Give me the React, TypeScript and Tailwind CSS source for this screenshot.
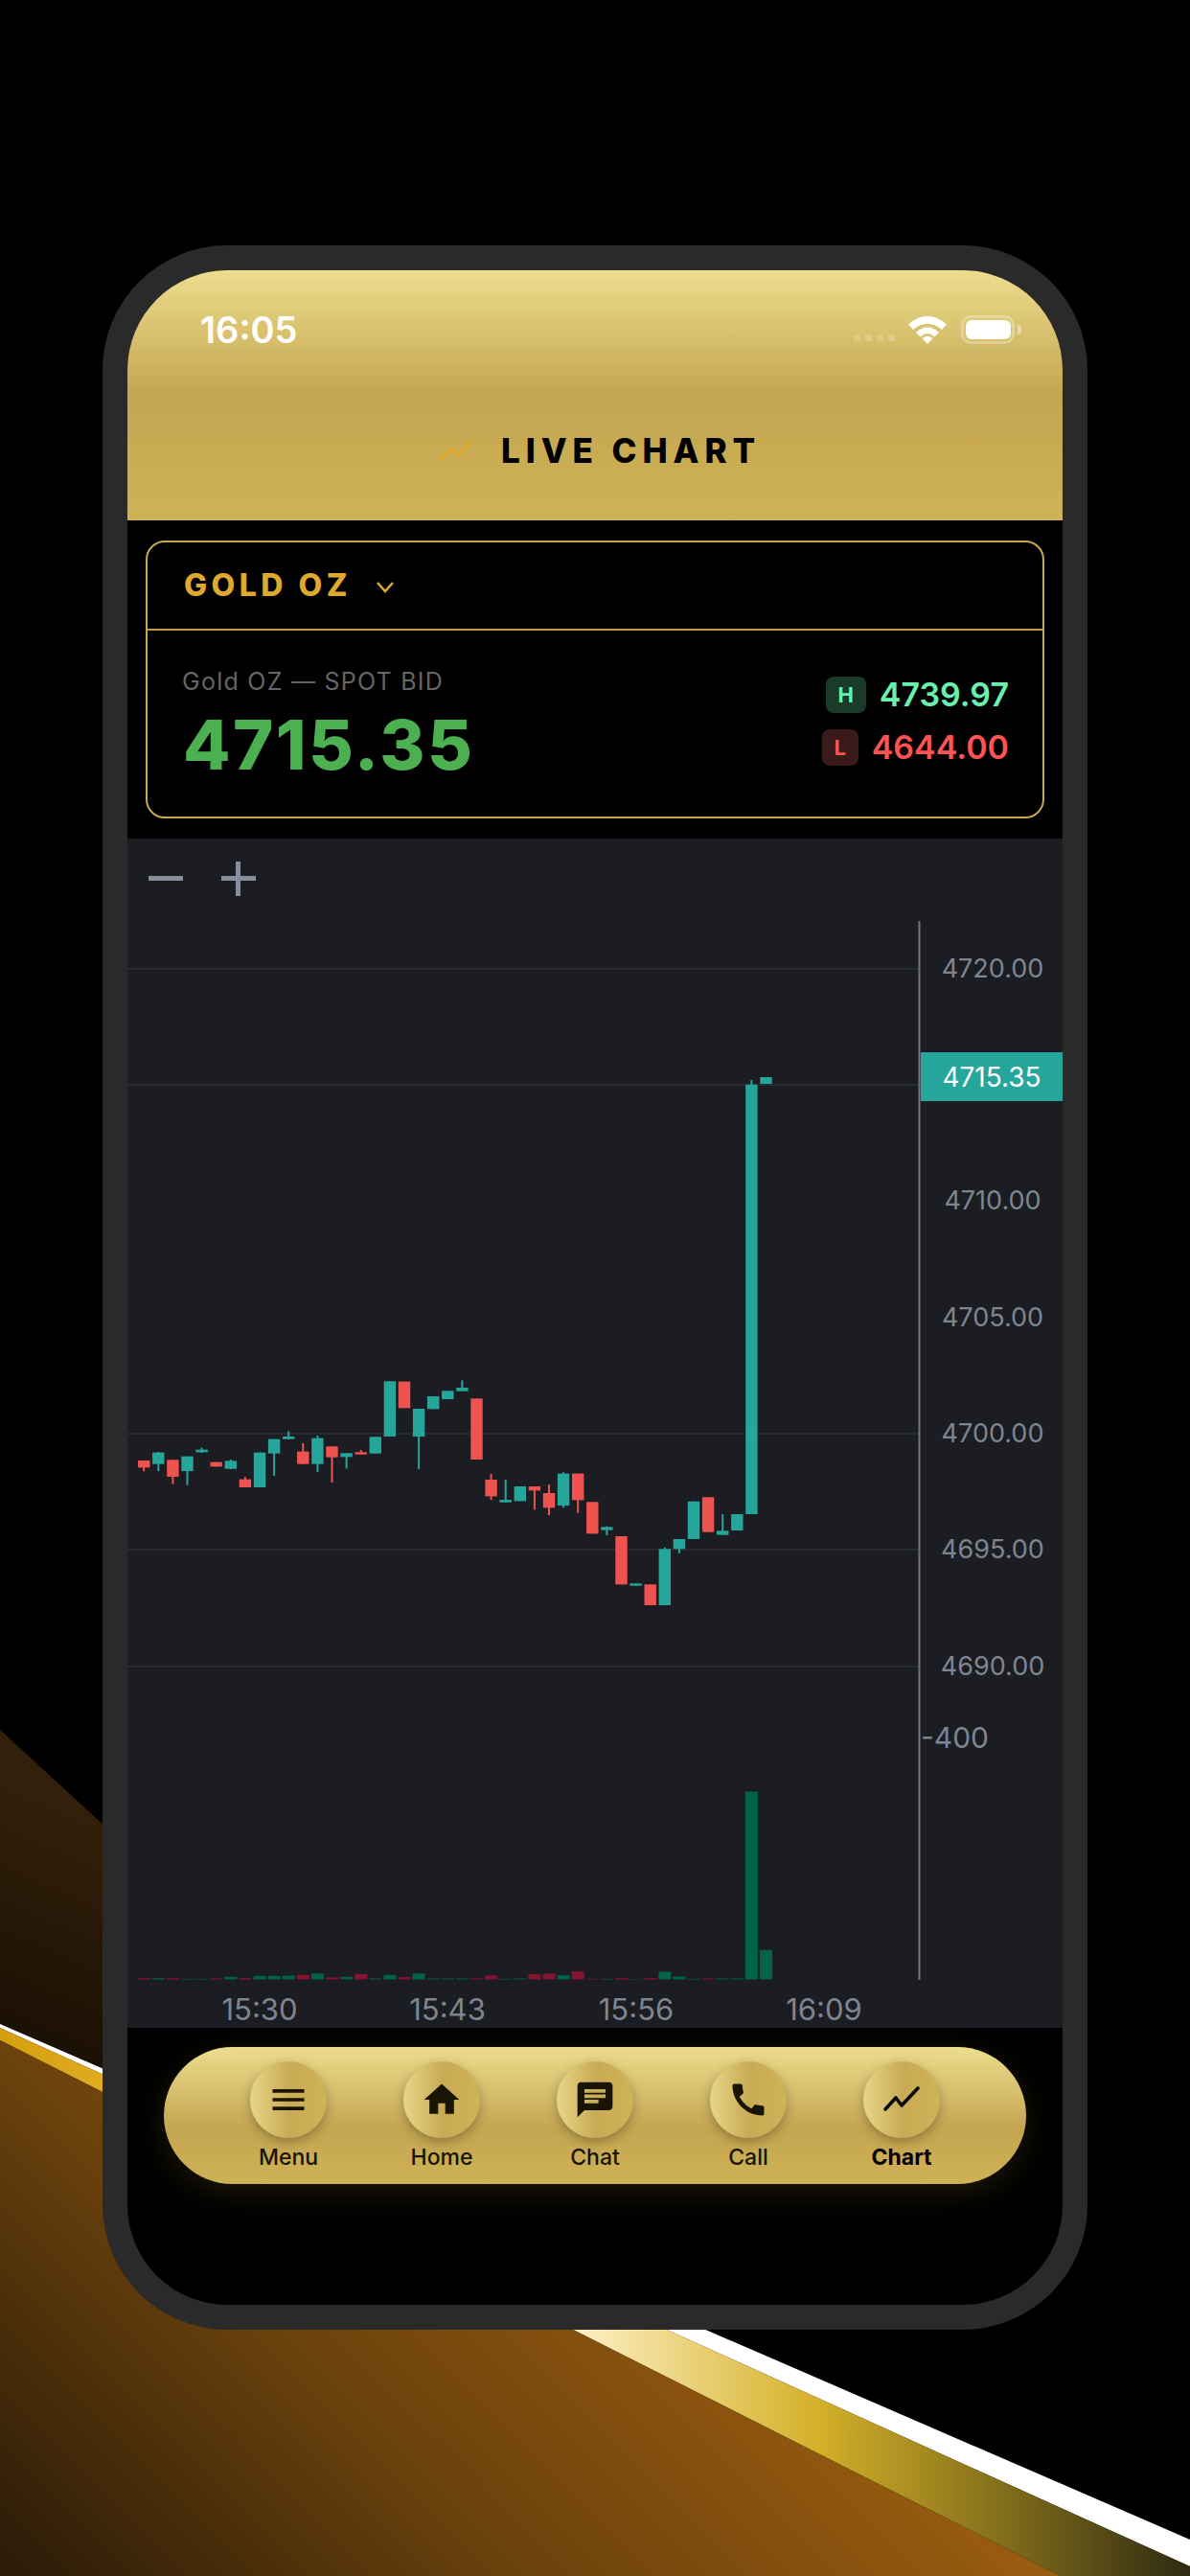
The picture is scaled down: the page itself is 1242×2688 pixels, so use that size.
import React from 'react';
import { MdHome, MdChat, MdCall, MdMenu } from 'react-icons/md';

type Candle = [number, number, number, number, number];

// up(1)/down(0), body top, body bottom, wick top, wick bottom - y in 3x crop units from 1380
const candles: Candle[] = [
  [0, 432, 454, 432, 466], [1, 407, 443, 405, 465], [0, 430, 483, 430, 506], [1, 419, 465, 419, 509],
  [1, 398, 406, 392, 408], [0, 437, 451, 437, 451], [1, 433, 458, 429, 459], [0, 491, 516, 484, 516],
  [1, 407, 516, 407, 516], [1, 365, 410, 365, 480], [1, 357, 365, 340, 366], [0, 404, 443, 378, 443],
  [1, 362, 443, 354, 468], [0, 388, 422, 388, 501], [1, 409, 421, 409, 457], [0, 406, 413, 399, 413],
  [1, 358, 410, 358, 410], [1, 184, 357, 184, 357], [0, 185, 268, 185, 268], [1, 270, 357, 270, 459],
  [1, 231, 271, 231, 271], [1, 214, 240, 214, 240], [1, 204, 215, 181, 215], [0, 238, 429, 238, 429],
  [0, 492, 544, 474, 556], [1, 555, 563, 492, 563], [1, 513, 559, 513, 559], [0, 513, 526, 513, 586],
  [0, 534, 580, 507, 603], [1, 473, 573, 469, 580], [0, 473, 556, 473, 596], [0, 562, 661, 562, 661],
  [1, 640, 650, 638, 666], [0, 669, 820, 669, 820], [1, 817, 824, 817, 824], [0, 820, 885, 820, 885],
  [1, 709, 885, 704, 885], [1, 678, 709, 678, 723], [1, 560, 678, 560, 678], [0, 547, 656, 547, 656],
  [1, 652, 665, 600, 665], [1, 600, 651, 600, 651], [1, -745, 600, -759, 600], [1, -768, -747, -768, -747],
];

// same order as candles, heights in px
const volumes = [
  1.3, 1.3, 1.3, 0.6, 0.6, 1, 2.7, 1.3, 3.7, 3.7, 4, 4.7, 6.3, 2, 2.7, 5.7, 1, 4.7, 2.3, 6.3, 1, 1, 1, 1,
  4, 0.6, 1, 5.3, 6, 4.3, 8.3, 0.6, 0.6, 1.3, 0.4, 1.3, 8, 3, 0.6, 1, 1, 1, 196, 30.7,
];
const volumeUp = [
  0, 1, 0, 1, 1, 0, 1, 0, 1, 1, 1, 0, 1, 0, 1, 0, 1, 1, 0, 1, 1, 1, 1, 0, 0, 1, 1, 0, 0, 1, 0, 0, 1, 0, 1, 0,
  1, 1, 1, 0, 1, 1, 1, 1,
];

const axisLabels = [
  { y: 1011, text: '4720.00' },
  { y: 1253, text: '4710.00' },
  { y: 1375, text: '4705.00' },
  { y: 1496, text: '4700.00' },
  { y: 1617, text: '4695.00' },
  { y: 1739, text: '4690.00' },
];

const times = [
  { x: 271, text: '15:30' },
  { x: 467, text: '15:43' },
  { x: 664, text: '15:56' },
  { x: 860, text: '16:09' },
];

function ThinChart({ className, size }: { className?: string; size?: number }) {
  return (
    <svg className={className} width={size} height={size} viewBox="0 0 44 44" fill="none">
      <path d="M5 32 L16 20 L22 28 L39 10" stroke="currentColor" strokeWidth="3.6" strokeLinecap="round" strokeLinejoin="round" />
    </svg>
  );
}

const navItems = [
  { label: 'Menu', Icon: MdMenu },
  { label: 'Home', Icon: MdHome },
  { label: 'Chat', Icon: MdChat },
  { label: 'Call', Icon: MdCall },
  { label: 'Chart', Icon: ThinChart, active: true },
];

function Backdrop() {
  return (
    <svg className="absolute inset-0" width="1242" height="2688" viewBox="0 0 1242 2688">
      <defs>
        <linearGradient id="darkBrown" gradientUnits="userSpaceOnUse" x1="0" y1="2150" x2="107" y2="1900">
          <stop offset="0" stopColor="#170e03" />
          <stop offset="1" stopColor="#33200a" />
        </linearGradient>
        <linearGradient id="brown" gradientUnits="userSpaceOnUse" x1="0" y1="2688" x2="553" y2="2135">
          <stop offset="0" stopColor="#2a1a08" />
          <stop offset="0.5" stopColor="#6b420c" />
          <stop offset="1" stopColor="#9a5c10" />
        </linearGradient>
        <linearGradient id="goldBand" gradientUnits="userSpaceOnUse" x1="0" y1="0" x2="1242" y2="0">
          <stop offset="0" stopColor="#d69d10" />
          <stop offset="0.086" stopColor="#e0ab1e" />
          <stop offset="0.483" stopColor="#fff0c4" />
          <stop offset="0.688" stopColor="#d4b028" />
          <stop offset="1" stopColor="#2e2a10" />
        </linearGradient>
      </defs>
      <polygon points="0,1805 300,2081 300,2242 0,2112" fill="url(#darkBrown)" />
      <polygon points="0,2112 1242,2650 1242,2678 0,2116" fill="#ffffff" />
      <polygon points="0,2116 1242,2678 1242,2688 1107,2688 0,2129" fill="url(#goldBand)" />
      <polygon points="0,2129 1107,2688 0,2688" fill="url(#brown)" />
    </svg>
  );
}

function StatusBar() {
  return (
    <div className="mt-[42px] flex h-[40px] items-center justify-between pl-[76px] pr-[43px]">
      <span className="text-[38px] font-semibold leading-none text-white">16:05</span>
      <div className="flex items-center">
        <div className="mt-[16px] flex gap-[5px]">
          <span className="h-[7px] w-[7px] rounded-[2px] bg-white/20" />
          <span className="h-[7px] w-[7px] rounded-[2px] bg-white/20" />
          <span className="h-[7px] w-[7px] rounded-[2px] bg-white/20" />
          <span className="h-[7px] w-[7px] rounded-[2px] bg-white/20" />
        </div>
        <svg className="ml-[14px]" width="40" height="30" viewBox="0 0 40 30">
          <path d="M0 9.5 Q20 -8 40 9.5 L35 15 Q20 2.5 5 15 Z" fill="#fff" />
          <path d="M8 18 Q20 7 32 18 L27.5 22.5 Q20 15.5 12.5 22.5 Z" fill="#fff" />
          <path d="M14.5 24 Q20 19.5 25.5 24 L20 30 Z" fill="#fff" />
        </svg>
        <div className="ml-[15px] flex items-center">
          <div className="flex h-[30px] w-[56px] items-center justify-center rounded-[10px] border-[3px] border-white/30">
            <span className="h-[20px] w-[47px] rounded-[6px] bg-white" />
          </div>
          <span className="ml-[3px] h-[10px] w-[4px] rounded-r-[3px] bg-white/40" />
        </div>
      </div>
    </div>
  );
}

function Header() {
  return (
    <div className="h-[261px] shrink-0 bg-[linear-gradient(180deg,#ecdd8d_0%,#c4a551_50%,#cfb256_100%)]">
      <StatusBar />
      <div className="mt-[86px] flex h-[40px] items-center pl-[324px]">
        <svg width="36" height="24" viewBox="0 0 36 24" fill="none">
          <path d="M1 22 L15 11 L21 17 L35 2" stroke="#dca92e" strokeWidth="3.5" />
        </svg>
        <span className="ml-[30px] text-[35px] font-extrabold leading-none tracking-[0.17em] text-black">LIVE CHART</span>
      </div>
    </div>
  );
}

function PriceCard() {
  return (
    <div className="mx-[19px] mt-[21px] h-[290px] shrink-0 rounded-[20px] border-2 border-[#c9a84c]">
      <div className="flex h-[92px] items-center border-b-2 border-[#c49c3c] pl-[38px]">
        <span className="text-[32px] font-extrabold leading-none tracking-[0.14em] text-[#dfa92f]">GOLD OZ</span>
        <svg className="ml-[25px] mt-[3px]" width="20" height="13" viewBox="0 0 20 13" fill="none">
          <path d="M2 2 L10 11 L18 2" stroke="#dfa92f" strokeWidth="2.5" />
        </svg>
      </div>
      <div className="flex justify-between pl-[36px] pr-[35px]">
        <div>
          <div className="mt-[38px] text-[25px] leading-[30px] tracking-[0.05em] text-[#666666]">Gold OZ — SPOT BID</div>
          <div className="ml-[1px] mt-[15px] text-[72px] font-extrabold leading-[72px] tracking-[0.034em] text-[#4caf50]">4715.35</div>
        </div>
        <div className="mt-[48px] flex flex-col items-end gap-[17px]">
          <div className="flex items-center gap-[14px]">
            <span className="flex h-[38px] w-[42px] items-center justify-center rounded-[8px] bg-[#1a3a2a] text-[22px] font-bold text-[#69f0ae]">H</span>
            <span className="text-[34px] font-semibold leading-none text-[#69f0ae]">4739.97</span>
          </div>
          <div className="flex items-center gap-[14px]">
            <span className="flex h-[38px] w-[38px] items-center justify-center rounded-[8px] bg-[#3a1a1a] text-[22px] font-bold text-[#ff5252]">L</span>
            <span className="text-[34px] font-semibold leading-none text-[#ff5252]">4644.00</span>
          </div>
        </div>
      </div>
    </div>
  );
}

function Chart() {
  const baseX = 150.2;
  const step = 15.1;
  return (
    <div className="relative mt-[21px] h-[1241px] shrink-0 bg-[#1b1d23]">
      <svg className="absolute inset-0" width="976" height="1241" viewBox="133 875 976 1241">
        {[1011, 1132, 1496, 1617, 1739].map((y) => (
          <line key={y} x1="133" x2="959" y1={y} y2={y} stroke="#2c2f35" strokeWidth="1.5" />
        ))}
        {candles.map(([up, top, bottom, wickTop, wickBottom], i) => {
          const x = baseX + i * step;
          const fill = up ? '#26a69a' : '#ef5350';
          return (
            <g key={i} fill={fill}>
              <rect x={x - 1} y={1380 + wickTop / 3} width="2" height={(wickBottom - wickTop) / 3} />
              <rect x={x - 6.2} y={1380 + top / 3} width="12.4" height={(bottom - top) / 3} />
            </g>
          );
        })}
        {volumes.map((h, i) => (
          <rect
            key={i}
            x={baseX + i * step - 6.5}
            y={2065.5 - h}
            width="13"
            height={h}
            fill={volumeUp[i] ? '#00634a' : '#85152f'}
          />
        ))}
        <line x1="959.5" x2="959.5" y1="961" y2="2066" stroke="#6f7785" strokeWidth="2" />
        {axisLabels.map((l) => (
          <text key={l.text} x="1036" y={l.y + 9} textAnchor="middle" className="fill-[#7f8590] text-[27px]">
            {l.text}
          </text>
        ))}
        <text x="961" y="1824" className="fill-[#7f8590] text-[30px]">-400</text>
        {times.map((t) => (
          <text key={t.text} x={t.x} y="2108" textAnchor="middle" className="fill-[#7f8590] text-[31px]">
            {t.text}
          </text>
        ))}
      </svg>
      <div className="absolute left-[22px] top-[39px] h-[5px] w-[36px] bg-[#868d9b]" />
      <div className="absolute left-[98px] top-[39px] h-[5px] w-[36px] bg-[#868d9b]" />
      <div className="absolute left-[113px] top-[24px] h-[36px] w-[5px] bg-[#868d9b]" />
      <div className="absolute left-[828px] right-0 top-[223px] flex h-[51px] items-center justify-center bg-[#26a69a] text-[28px] text-white">
        4715.35
      </div>
    </div>
  );
}

function BottomNav() {
  return (
    <div className="mx-[38px] mt-[20px] grid h-[143px] shrink-0 grid-cols-5 rounded-[72px] bg-[linear-gradient(180deg,#ecdd8d_0%,#c4a551_60%,#cfb256_100%)] px-[50px] pt-[15px] shadow-[0_8px_32px_rgba(212,175,55,0.14)]">
      {navItems.map(({ label, Icon, active }) => (
        <div key={label} className="flex flex-col items-center">
          <div className="flex h-[80px] w-[80px] items-center justify-center rounded-full bg-[linear-gradient(90deg,#e8d688_0%,#c9ab55_50%,#cfb158_100%)] shadow-[0_4px_12px_rgba(0,0,0,0.28)]">
            <Icon className={active ? 'text-[#0a0a0a]' : 'text-[#1a1405]'} size={44} />
          </div>
          <span className={active ? 'mt-[7px] text-[23px] font-bold leading-[26px] text-black' : 'mt-[7px] text-[23px] font-medium leading-[26px] text-[#1a1405]'}>
            {label}
          </span>
        </div>
      ))}
    </div>
  );
}

export default function App() {
  return (
    <div className="relative h-[2688px] w-[1242px] overflow-hidden bg-black [font-family:Inter,sans-serif]">
      <Backdrop />
      <div className="relative ml-[107px] pt-[256px]">
        <div className="h-[2175px] w-[1028px] rounded-[130px] bg-[#2a2a2a] p-[26px]">
          <div className="flex h-full flex-col overflow-hidden rounded-[104px] bg-black">
            <Header />
            <PriceCard />
            <Chart />
            <BottomNav />
          </div>
        </div>
      </div>
    </div>
  );
}
